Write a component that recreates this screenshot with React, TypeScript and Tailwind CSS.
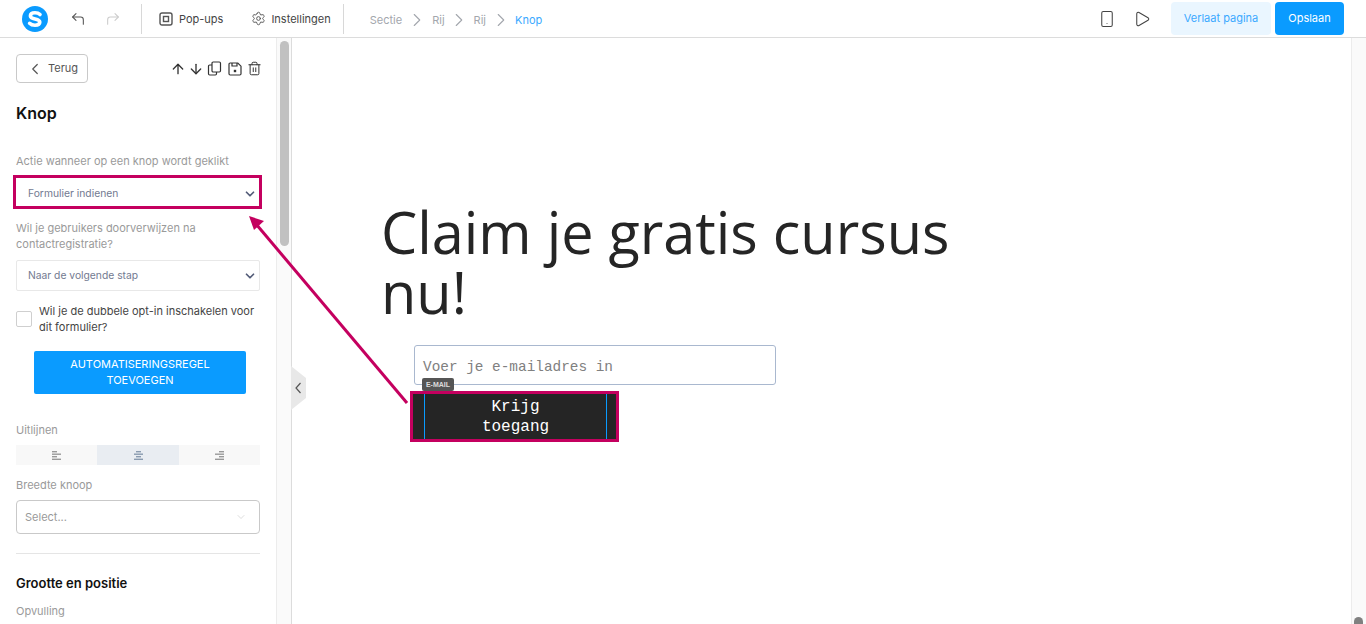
import { ArrowDown, ArrowUp, ChevronDown, ChevronLeft, ChevronRight, CornerUpLeft, CornerUpRight, Play, Settings, Smartphone, Trash2 } from "lucide-react";

function Logo() {
	return (
		<svg width="26" height="26" viewBox="0 0 26 26">
			<circle cx="13" cy="13" r="13" fill="#0a9bff" />
			<path d="M18 8.5c-1.2-1.2-3-1.8-5-1.8-2.6 0-4.6 1.2-4.6 3.2 0 4 9.4 2.2 9.4 6.2 0 2-2 3.2-4.8 3.2-2.2 0-4.2-.7-5.4-2" fill="none" stroke="#fff" strokeWidth="3.6" strokeLinecap="round" />
		</svg>
	);
}

function CopyIcon() {
	return (
		<svg width="15" height="15" viewBox="0 0 15 15" fill="none" stroke="#333" strokeWidth="1.2" className="ml-[3px]">
			<rect x="5" y="1" width="8.5" height="10" rx="1.2" />
			<path d="M5 4H2.7A1.2 1.2 0 0 0 1.5 5.2v7.6A1.2 1.2 0 0 0 2.7 14h5.6a1.2 1.2 0 0 0 1.2-1.2V11" />
		</svg>
	);
}

function SaveIcon() {
	return (
		<svg width="14" height="14" viewBox="0 0 14 14" fill="none" stroke="#333" strokeWidth="1.2" className="ml-[6px]">
			<path d="M2.2 1h7.6L13 4.2v7.6a1.2 1.2 0 0 1-1.2 1.2H2.2A1.2 1.2 0 0 1 1 11.800V2.200A1.200 1.200 0 0 1 2.200 1z" />
			<path d="M4 1v3h5V1" />
			<rect x="5.800" y="7.800" width="2.400" height="2.400" fill="#333" stroke="none" />
		</svg>
	);
}

function AlignIcon({ side, active }: { side: "left" | "center" | "right"; active?: boolean }) {
	const shortX = side === "left" ? 0 : side === "center" ? 2 : 4;
	return (
		<svg width="9" height="9" viewBox="0 0 9 9" fill={active ? "#8a9bb0" : "#999"}>
			<rect x={shortX} y="0" width="5" height="1.4" />
			<rect x="0" y="2.5" width="9" height="1.4" />
			<rect x={shortX} y="5" width="5" height="1.4" />
			<rect x="0" y="7.6" width="9" height="1.4" />
		</svg>
	);
}

function Breadcrumb() {
	return (
		<div className="flex items-center pt-[3px] pl-[26px] text-[11px] text-[#a3a7ad]">
			<span>Sectie</span>
			<ChevronRight size={22} strokeWidth={1.2} className="mx-[4px]" />
			<span>Rij</span>
			<ChevronRight size={22} strokeWidth={1.2} className="mx-[3.5px]" />
			<span>Rij</span>
			<ChevronRight size={22} strokeWidth={1.2} className="mx-[3.5px]" />
			<span className="text-[#3aa9ff]">Knop</span>
		</div>
	);
}

function TopBar() {
	return (
		<header className="flex h-[38px] shrink-0 items-center border-b border-[#dcdcdc] bg-white">
			<div className="flex w-[141px] items-center pl-[22px]">
				<Logo />
				<CornerUpLeft size={16} strokeWidth={1.6} className="ml-[22px] text-[#555]" />
				<CornerUpRight size={16} strokeWidth={1.6} className="ml-[19px] text-[#ccc]" />
			</div>
			<div className="flex h-[30px] items-center gap-[28px] border-x border-[#d8d8d8] pr-3 pl-[17px] text-[11px] text-[#444]">
				<div className="flex items-center gap-[6px]">
					<svg width="14" height="14" viewBox="0 0 14 14" fill="none" stroke="#555" strokeWidth="1.4">
						<rect x="1" y="1" width="12" height="12" rx="2" />
						<rect x="4.5" y="4.5" width="5" height="5" />
					</svg>
					<span className="pt-[2px]">Pop-ups</span>
				</div>
				<div className="flex items-center gap-[5px]">
					<Settings size={15} strokeWidth={1.5} className="text-[#555]" />
					<span className="pt-[2px]">Instellingen</span>
				</div>
			</div>
			<Breadcrumb />
			<div className="ml-auto flex items-center pr-[22px]">
				<Smartphone size={18} strokeWidth={1.4} className="text-[#444]" />
				<Play size={18} strokeWidth={1.4} className="ml-[17px] text-[#444]" />
				<button className="ml-[20px] h-[33px] w-[100px] rounded-[4px] bg-[#eaf6ff] text-[11px] text-[#3aa9ff]">Verlaat pagina</button>
				<button className="ml-1 h-[33px] w-[69px] rounded-[4px] bg-[#0a9bff] text-[11px] text-white">Opslaan</button>
			</div>
		</header>
	);
}

function NativeSelect({ label, outlined }: { label: string; outlined?: boolean }) {
	return (
		<div className={`flex h-[31px] items-center justify-between rounded-[2px] border pr-[2px] pl-[11px] text-[10.3px] text-[#737a91] ${outlined ? "border-transparent" : "border-[#e8e8e8]"}`}>
			<span>{label}</span>
			<ChevronDown size={14} strokeWidth={3} className="text-[#535c78]" />
		</div>
	);
}

function Sidebar() {
	return (
		<aside className="flex w-[292px] shrink-0 overflow-hidden border-r border-[#dcdcdc]">
			<div className="w-[277px] shrink-0 border-r border-[#ececec] px-4 pt-4">
				<div className="flex items-center justify-between">
					<button className="flex h-[29px] w-[72px] items-center rounded-[4px] border border-[#c9c9c9] pl-[9px] text-[11px] text-[#555]">
						<ChevronLeft size={18} strokeWidth={1.6} className="mr-[4px]" />
						Terug
					</button>
					<div className="-mr-[2px] flex items-center text-[#333]">
						<ArrowUp size={16} strokeWidth={2} />
						<ArrowDown size={16} strokeWidth={2} className="ml-[2px]" />
						<CopyIcon />
						<SaveIcon />
						<Trash2 size={15} strokeWidth={1.6} className="ml-[5px]" />
					</div>
				</div>
				<h2 className="mt-[19px] text-base leading-[22px] font-semibold text-[#111]">Knop</h2>
				<p className="mt-[29px] text-[11px] leading-4 text-[#9a9a9a]">Actie wanneer op een knop wordt geklikt</p>
				<div className="mt-[9px]">
					<NativeSelect label="Formulier indienen" outlined />
				</div>
				<p className="mt-[11px] text-[11px] leading-4 text-[#9a9a9a]">Wil je gebruikers doorverwijzen na contactregistratie?</p>
				<div className="mt-[8px]">
					<NativeSelect label="Naar de volgende stap" />
				</div>
				<div className="mt-[12px] flex items-center gap-[7px]">
					<span className="h-4 w-4 shrink-0 rounded-[2px] border border-[#cfcfcf]" />
					<span className="text-[11px] leading-4 text-[#444]">Wil je de dubbele opt-in inschakelen voor dit formulier?</span>
				</div>
				<button className="mt-4 ml-[18px] block h-[43px] w-[212px] rounded-[2px] bg-[#0a9bff] px-6 pb-[2px] text-[11px] leading-4 text-white">AUTOMATISERINGSREGEL TOEVOEGEN</button>
				<p className="mt-[28px] text-[11px] leading-4 text-[#9a9a9a]">Uitlijnen</p>
				<div className="mt-[7px] grid h-5 grid-cols-[81px_82px_81px] bg-[#f8f8f8]">
					<div className="flex items-center justify-center"><AlignIcon side="left" /></div>
					<div className="flex items-center justify-center bg-[#e9edf2]"><AlignIcon side="center" active /></div>
					<div className="flex items-center justify-center"><AlignIcon side="right" /></div>
				</div>
				<p className="mt-[12px] text-[11px] leading-4 text-[#9a9a9a]">Breedte knoop</p>
				<div className="mt-[7px] flex h-[34px] items-center justify-between rounded-[4px] border border-[#c9c9c9] pr-[12px] pl-2 text-[11px] text-[#9a9a9a]">
					<span>Select...</span>
					<ChevronDown size={12} strokeWidth={1} className="text-[#bbb]" />
				</div>
				<div className="mt-[19px] border-t border-[#e5e5e5]" />
				<h3 className="mt-[21px] text-[13px] leading-4 font-semibold text-[#111]">Grootte en positie</h3>
				<p className="mt-[12px] text-[11px] leading-4 text-[#9a9a9a]">Opvulling</p>
			</div>
			<div className="w-[14px] shrink-0 bg-[#fafafa] pt-[3px] pl-[3px]">
				<div className="h-[205px] w-[9px] rounded-[5px] bg-[#c1c1c1]" />
			</div>
		</aside>
	);
}

function Canvas() {
	return (
		<main className="flex-1 pt-[164px] pl-[89px]">
			<h1 className="w-[620px] font-['Open_Sans',sans-serif] text-[57.6px] leading-[60px] text-[#252525]">Claim je gratis cursus nu!</h1>
			<div className="mt-[23px] ml-[33px] flex h-10 w-[362px] items-center rounded-[3px] border border-[#a9b8cf] pt-[5px] pl-2 font-['Liberation_Mono',monospace] text-[14.4px] text-[#808080]">Voer je e-mailadres in</div>
			<div className="relative mt-[6px] ml-[29px] h-[51px] w-[209px] border-[3px] border-[#c4005f] bg-[#252525] text-center font-['Liberation_Mono',monospace] text-base leading-5 text-white">
				<span className="absolute -top-[16px] left-[9px] flex h-[13px] w-[32px] items-center justify-center rounded-[2px] bg-[#555] font-['Liberation_Sans',sans-serif] text-[7px] leading-none font-bold text-[#ddd]">E-MAIL</span>
				<div className="mr-[9px] ml-[11px] h-full border-x border-[#0a9bff] pt-[3px]">Krijg<br />toegang</div>
			</div>
		</main>
	);
}

export default function App() {
	return (
		<div className="relative flex h-[624px] w-[1366px] flex-col overflow-hidden bg-white font-['Inter',sans-serif]">
			<TopBar />
			<div className="flex min-h-0 flex-1">
				<Sidebar />
				<Canvas />
				<div className="relative w-[15px] shrink-0 border-l border-[#ececec] bg-[#fafafa]">
					<div className="absolute right-[3px] -bottom-[6px] h-[13px] w-[9px] rounded-[5px] bg-[#808080]" />
				</div>
			</div>
			<div className="pointer-events-none absolute top-[175px] left-[13px] h-[34px] w-[249px] border-[3px] border-[#c4005f]" />
			<svg width="15" height="44" viewBox="0 0 15 44" className="absolute top-[366px] left-[291px]">
				<path d="M0 0l15 12v20L0 44z" fill="#e8e8e8" />
				<path d="M9.5 17l-4.5 5 4.5 5" fill="none" stroke="#555" strokeWidth="1.2" />
			</svg>
			<svg width="1366" height="624" className="pointer-events-none absolute top-0 left-0">
				<path d="M407 403L256 224" stroke="#c4005f" strokeWidth="3" />
				<path d="M249 216l15 5-10 9z" fill="#c4005f" />
			</svg>
		</div>
	);
}
